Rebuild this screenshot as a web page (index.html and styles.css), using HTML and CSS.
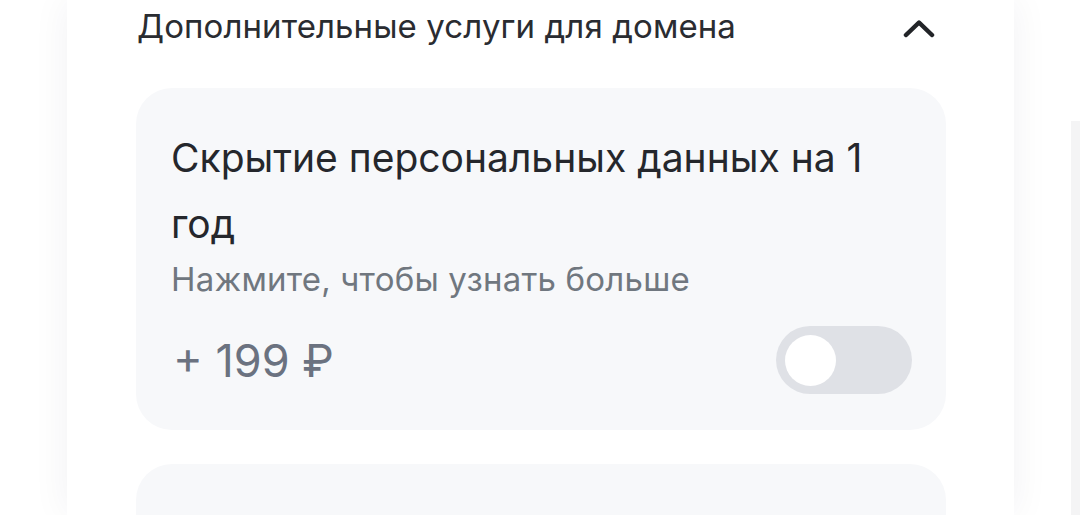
FILE: index.html
```html
<!DOCTYPE html>
<html lang="ru">
<head>
<meta charset="utf-8">
<link rel="stylesheet" href="styles.css">
</head>
<body>
<div class="page">
  <div class="gutter"></div>
  <main class="panel">
    <div class="section-head">
      <span class="section-title">Дополнительные услуги для домена</span>
      <svg class="chevron" width="32" height="20" viewBox="0 0 32 20"><polyline points="3,16 16,3.5 29,16" fill="none" stroke="#222428" stroke-width="4.5" stroke-linecap="round" stroke-linejoin="round"/></svg>
    </div>
    <div class="card">
      <div class="card-title">Скрытие персональных данных на 1 год</div>
      <div class="card-sub">Нажмите, чтобы узнать больше</div>
      <div class="card-row">
        <span class="price">+ 199 ₽</span>
        <span class="toggle"><span class="knob"></span></span>
      </div>
    </div>
    <div class="card card-next"></div>
  </main>
  <aside class="side"></aside>
</div>
</body>
</html>
```
FILE: styles.css
```css
html, body {
  margin: 0;
  padding: 0;
  background: #ffffff;
  overflow: hidden;
}
body {
  font-family: Inter, "Noto Sans", sans-serif;
  width: 1080px;
  height: 515px;
}
.page {
  display: flex;
  height: 515px;
  overflow: hidden;
}
.gutter {
  width: 67px;
  flex: none;
}
.panel {
  width: 947px;
  flex: none;
  background: #ffffff;
  box-shadow: 0 0 36px rgba(30, 40, 70, 0.06);
  padding: 0 68px 0 69px;
  box-sizing: border-box;
  position: relative;
  z-index: 1;
}
.section-head {
  display: flex;
  align-items: center;
  justify-content: space-between;
  height: 54px;
  padding: 0 11px 0 1px;
  margin-bottom: 34px;
}
.section-title {
  font-size: 33px;
  color: #2a2c31;
  line-height: 54px;
  padding-bottom: 2px;
  letter-spacing: 0.1px;
}
.chevron {
  display: block;
  margin-top: 3px;
}
.card {
  background: #f7f8fa;
  border-radius: 36px;
  padding: 37px 34px 36px 35px;
}
.card-title {
  font-size: 39px;
  line-height: 66px;
  color: #25272c;
}
.card-sub {
  font-size: 33px;
  line-height: 40px;
  color: #70777f;
  margin-top: 2px;
  letter-spacing: 0.2px;
}
.card-row {
  display: flex;
  align-items: center;
  justify-content: space-between;
  margin-top: 27px;
}
.price {
  font-size: 45px;
  color: #6b7280;
  padding-left: 2px;
}
.toggle {
  width: 136px;
  height: 68px;
  border-radius: 34px;
  background: #dfe1e6;
  display: flex;
  align-items: center;
  padding-left: 9px;
  box-sizing: border-box;
}
.knob {
  width: 51px;
  height: 51px;
  border-radius: 50%;
  background: #ffffff;
}
.card-next {
  margin-top: 34px;
  height: 51px;
  padding: 0;
  border-radius: 36px 36px 0 0;
}
.side {
  margin-left: 57px;
  margin-top: 121px;
  flex: 1;
  background: #f4f4f5;
}
```
